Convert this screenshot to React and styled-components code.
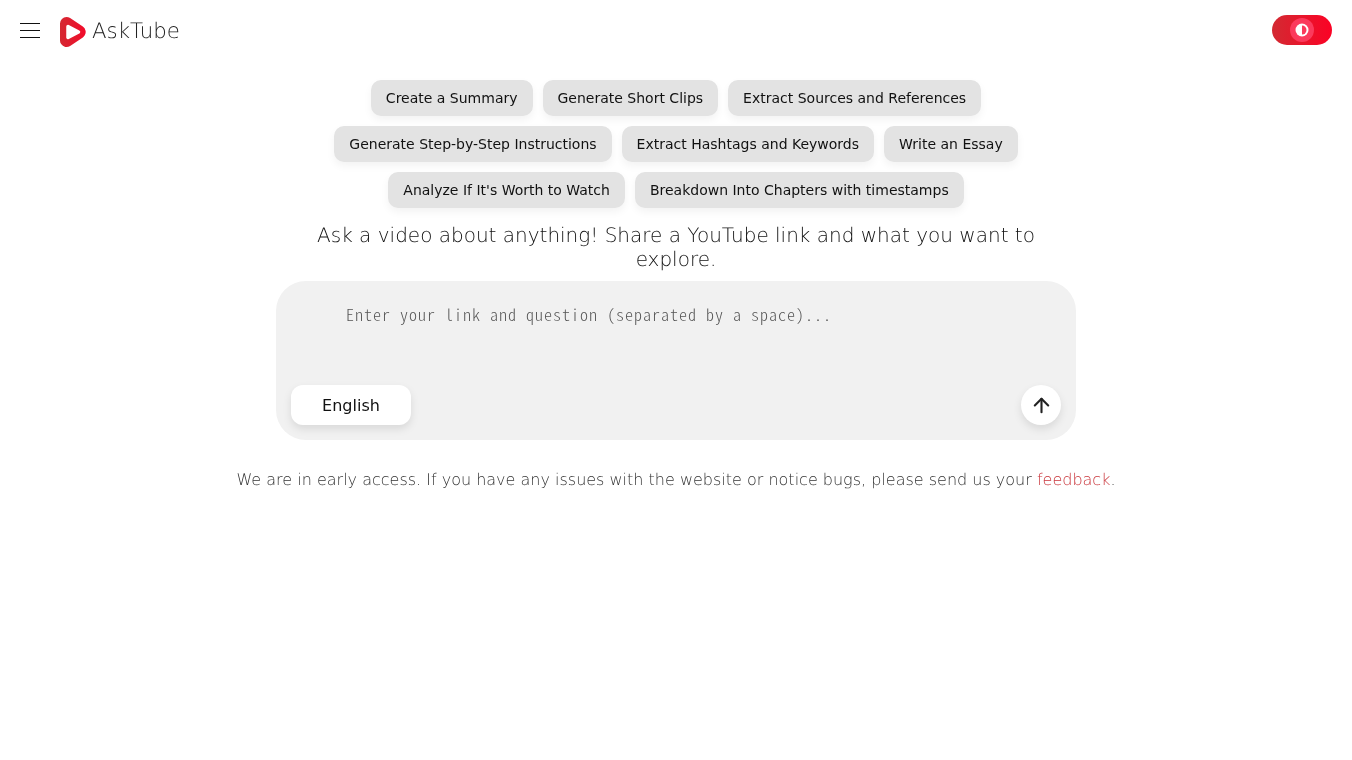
import React from 'react'
import styled, { createGlobalStyle } from 'styled-components'
import { ArrowUp } from 'lucide-react'

const GlobalStyle = createGlobalStyle`
  body {
    margin: 0;
    background: #fff;
    font-family: 'DejaVu Sans', sans-serif;
    text-rendering: geometricPrecision;
  }

  #root {
    will-change: opacity;
  }
`

const Header = styled.header`
  display: flex;
  align-items: center;
  justify-content: space-between;
  height: 60px;
  padding: 0 20px;
`

const Brand = styled.div`
  display: flex;
  align-items: center;
`

const MenuButton = styled.button`
  display: flex;
  flex-direction: column;
  gap: 6px;
  width: 20px;
  padding: 0;
  margin-right: 19px;
  border: none;
  background: none;
  cursor: pointer;

  span {
    height: 1px;
    background: #111;
  }
`

const LogoLink = styled.div`
  display: flex;
  align-items: center;
  margin-top: 4px;
`

const LogoName = styled.span`
  margin: 0 0 2px 5px;
  font-size: 21.3px;
  font-family: 'DejaVu Sans', sans-serif;
  font-weight: 200;
  color: #222;
`

const ThemeToggle = styled.button`
  display: flex;
  align-items: center;
  justify-content: center;
  width: 60px;
  height: 30px;
  padding: 0;
  border: none;
  border-radius: 15px;
  background: linear-gradient(90deg, #d32a32, #fb0225);
  cursor: pointer;
`

const ToggleKnob = styled.span`
  display: flex;
  align-items: center;
  justify-content: center;
  width: 24px;
  height: 24px;
  border-radius: 50%;
  background: #fb3a5c;
`

const Main = styled.main`
  display: flex;
  flex-direction: column;
  align-items: center;
  padding-top: 20px;
`

const Prompts = styled.div`
  display: flex;
  flex-wrap: wrap;
  justify-content: center;
  gap: 10px;
  width: 800px;
`

const PromptButton = styled.button`
  height: 36px;
  padding: 0 15px;
  border: none;
  border-radius: 10px;
  background: #e3e3e3;
  box-shadow: 0 4px 8px rgba(0, 0, 0, 0.05);
  color: #111;
  font-family: 'DejaVu Sans', sans-serif;
  font-size: 14px;
  cursor: pointer;
`

const Heading = styled.h1`
  width: 800px;
  margin: 15px 0 10px;
  color: #111;
  font-size: 20px;
  font-weight: 200;
  line-height: 24px;
  text-align: center;
`

const AskBox = styled.form`
  display: flex;
  flex-direction: column;
  justify-content: space-between;
  box-sizing: border-box;
  width: 800px;
  height: 159px;
  padding: 23px 15px 15px;
  border-radius: 30px;
  background: #f1f1f1;
`

const QuestionInput = styled.textarea`
  height: 50px;
  margin-left: 55px;
  padding: 0;
  border: none;
  outline: none;
  resize: none;
  background: transparent;
  font-family: 'Noto Sans CJK JP', 'Noto Sans Mono CJK JP', monospace;
  font-feature-settings: 'hwid';
  font-size: 16px;
  font-weight: 300;
  letter-spacing: 1px;
  line-height: 20px;

  &::placeholder {
    color: #555;
    opacity: 1;
  }
`

const BoxFooter = styled.div`
  display: flex;
  align-items: center;
  justify-content: space-between;
`

const LanguageButton = styled.button`
  width: 120px;
  height: 40px;
  border: none;
  border-radius: 12px;
  background: #fff;
  box-shadow: 0 4px 8px rgba(0, 0, 0, 0.1);
  color: #111;
  font-family: 'DejaVu Sans', sans-serif;
  font-size: 16px;
  cursor: pointer;
`

const SendButton = styled.button`
  display: flex;
  align-items: center;
  justify-content: center;
  width: 40px;
  height: 40px;
  padding: 0;
  border: none;
  border-radius: 50%;
  background: #fff;
  box-shadow: 0 4px 8px rgba(0, 0, 0, 0.1);
  color: #222;
  cursor: pointer;
`

const Notice = styled.p`
  margin: 30px 0 0;
  color: #333;
  font-size: 16px;
  font-weight: 200;
  line-height: 20px;
`

const FeedbackLink = styled.a`
  color: #c9343a;
  text-decoration: none;
`

const prompts = [
  'Create a Summary',
  'Generate Short Clips',
  'Extract Sources and References',
  'Generate Step-by-Step Instructions',
  'Extract Hashtags and Keywords',
  'Write an Essay',
  "Analyze If It's Worth to Watch",
  'Breakdown Into Chapters with timestamps'
]

const Logo = () => (
  <svg width="28" height="32" viewBox="0 0 28 32">
    <defs>
      <linearGradient id="logoFill" gradientUnits="userSpaceOnUse" x1="0" y1="0" x2="28" y2="0">
        <stop offset="0" stopColor="#d32a32" />
        <stop offset="1" stopColor="#f4092a" />
      </linearGradient>
    </defs>
    <path
      d="M7.5 7.5 L20.2 16 L7.5 24.5 Z"
      fill="url(#logoFill)"
      stroke="url(#logoFill)"
      strokeWidth="13"
      strokeLinejoin="round"
    />
    <path
      d="M9 10.5 L19.5 16 L9 21.5 Z"
      fill="#fff"
      stroke="#fff"
      strokeWidth="3.5"
      strokeLinejoin="round"
    />
  </svg>
)

const ContrastIcon = () => (
  <svg width="14" height="14" viewBox="0 0 14 14">
    <circle cx="7" cy="7" r="6.5" fill="#fff" />
    <path d="M7 2.5 A4.5 4.5 0 0 1 7 11.5 Z" fill="#fb3a5c" />
  </svg>
)

const App = () => (
  <>
    <GlobalStyle />
    <Header>
      <Brand>
        <MenuButton aria-label="Menu">
          <span />
          <span />
          <span />
        </MenuButton>
        <LogoLink>
          <Logo />
          <LogoName>AskTube</LogoName>
        </LogoLink>
      </Brand>
      <ThemeToggle aria-label="Toggle theme">
        <ToggleKnob>
          <ContrastIcon />
        </ToggleKnob>
      </ThemeToggle>
    </Header>
    <Main>
      <Prompts>
        {prompts.map(prompt => (
          <PromptButton key={prompt} type="button">{prompt}</PromptButton>
        ))}
      </Prompts>
      <Heading>Ask a video about anything! Share a YouTube link and what you want to explore.</Heading>
      <AskBox>
        <QuestionInput placeholder="Enter your link and question (separated by a space)..." />
        <BoxFooter>
          <LanguageButton type="button">English</LanguageButton>
          <SendButton type="button" aria-label="Send">
            <ArrowUp size={23} strokeWidth={2.2} />
          </SendButton>
        </BoxFooter>
      </AskBox>
      <Notice>
        We are in early access. If you have any issues with the website or notice bugs, please send us your <FeedbackLink href="#">feedback</FeedbackLink>.
      </Notice>
    </Main>
  </>
)

export default App
